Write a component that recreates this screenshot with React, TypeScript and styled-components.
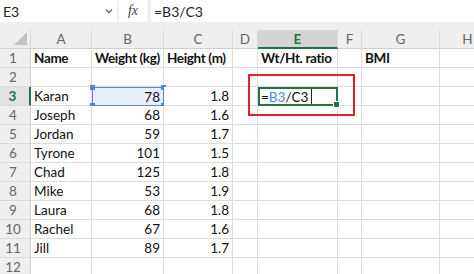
import React from 'react';
import styled, { createGlobalStyle } from 'styled-components';

const GREEN = '#217346';
const REF_BLUE = '#4f86e6';

const GlobalStyle = createGlobalStyle`
  body {
    margin: 0;
    background: #ffffff;
    font-family: Lato, "Liberation Sans", sans-serif;
  }
`;

const Sheet = styled.div`
  width: 474px;
  height: 274px;
  overflow: hidden;
  background: #efefef;
`;

const FormulaBar = styled.div`
  display: flex;
  height: 22px;
  gap: 2px;
  margin-bottom: 8px;
  font-size: 14px;
  color: #222;
`;

const NameBox = styled.div`
  width: 117px;
  background: #fff;
  display: flex;
  align-items: center;
  justify-content: space-between;
  padding: 0 4px 0 3px;
  box-sizing: border-box;
`;

const Chevron = styled.svg`
  width: 8px;
  height: 6px;
`;

const FxBox = styled.div`
  width: 28px;
  background: #fff;
  display: flex;
  align-items: center;
  justify-content: center;
  font-family: "Liberation Serif", serif;
  font-style: italic;
  font-size: 14px;
  color: #444;
  margin-right: 2px;
`;

const FormulaInput = styled.div`
  flex: 1;
  background: #fff;
  display: flex;
  align-items: center;
  padding-left: 3px;
`;

const Grid = styled.div`
  display: grid;
  grid-template-columns: 31px 61px 72px 69px 25px 80px 24px 78px 56px;
  grid-auto-rows: 19px;
  font-size: 13.5px;
`;

const Corner = styled.div`
  position: relative;
  background: #efefef;
  border-right: 1px solid #d6d6d6;
  border-bottom: 1px solid #cfcfcf;
  box-sizing: border-box;

  &::after {
    content: '';
    position: absolute;
    right: 3px;
    bottom: 3px;
    border-left: 13px solid transparent;
    border-bottom: 13px solid #c3c3c3;
  }
`;

const ColHeader = styled.div<{ $active?: boolean }>`
  display: flex;
  align-items: center;
  justify-content: center;
  box-sizing: border-box;
  background: ${(p) => (p.$active ? '#d4d4d4' : '#efefef')};
  color: ${(p) => (p.$active ? GREEN : '#666')};
  font-weight: ${(p) => (p.$active ? 700 : 400)};
  border-right: 1px solid #dadada;
  border-bottom: ${(p) => (p.$active ? `2px solid ${GREEN}` : '1px solid #cfcfcf')};
`;

const RowHeader = styled.div<{ $active?: boolean }>`
  display: flex;
  align-items: center;
  justify-content: center;
  padding-right: 4px;
  box-sizing: border-box;
  background: ${(p) => (p.$active ? '#e2e2e2' : '#efefef')};
  color: ${(p) => (p.$active ? GREEN : '#666')};
  font-weight: ${(p) => (p.$active ? 700 : 400)};
  border-right: ${(p) => (p.$active ? `2px solid ${GREEN}` : '1px solid #cfcfcf')};
  border-bottom: 1px solid #dadada;
`;

const Cell = styled.div<{ $num?: boolean; $bold?: boolean }>`
  position: relative;
  display: flex;
  align-items: center;
  justify-content: ${(p) => (p.$num ? 'flex-end' : 'flex-start')};
  padding: 0 3px;
  box-sizing: border-box;
  background: #fff;
  color: #111;
  white-space: nowrap;
  font-weight: ${(p) => (p.$bold ? 700 : 400)};
  letter-spacing: ${(p) => (p.$bold ? '-0.35px' : '0')};
  border-right: 1px solid #dcdcdc;
  border-bottom: 1px solid #dcdcdc;
`;

const RefCell = styled(Cell)`
  background: #e9f0fc;
  border: 1px solid ${REF_BLUE};
`;

const Handle = styled.span<{ $x: 'left' | 'right'; $y: 'top' | 'bottom' }>`
  position: absolute;
  width: 5px;
  height: 5px;
  background: ${REF_BLUE};
  ${(p) => p.$x}: -3px;
  ${(p) => p.$y}: -3px;
`;

const EditCell = styled(Cell)`
  border: 2px solid ${GREEN};
  padding-left: 1px;
  z-index: 2;
`;

const RefText = styled.span`
  color: ${REF_BLUE};
`;

const Caret = styled.span`
  display: inline-block;
  width: 1px;
  height: 15px;
  background: #222;
  margin-left: 3px;
`;

const FillHandle = styled.span`
  position: absolute;
  right: -4px;
  bottom: -4px;
  width: 5px;
  height: 5px;
  background: ${GREEN};
  border: 1px solid #fff;
`;

const Annotation = styled.span`
  position: absolute;
  left: -12px;
  top: -15px;
  width: 107px;
  height: 42px;
  border: 2px solid #e3202c;
  box-sizing: border-box;
  pointer-events: none;
`;

const columns = ['A', 'B', 'C', 'D', 'E', 'F', 'G', 'H'];

const people: [string, number, number][] = [
  ['Karan', 78, 1.8],
  ['Joseph', 68, 1.6],
  ['Jordan', 59, 1.7],
  ['Tyrone', 101, 1.5],
  ['Chad', 125, 1.8],
  ['Mike', 53, 1.9],
  ['Laura', 68, 1.8],
  ['Rachel', 67, 1.6],
  ['Jill', 89, 1.7],
];

const Blank = () => <Cell />;

const App = () => {
  const rows: React.ReactNode[] = [];

  // row 1: headings
  rows.push(
    <React.Fragment key="r1">
      <RowHeader>1</RowHeader>
      <Cell $bold>Name</Cell>
      <Cell $bold>Weight (kg)</Cell>
      <Cell $bold>Height (m)</Cell>
      <Blank />
      <Cell $bold>Wt/Ht. ratio</Cell>
      <Blank />
      <Cell $bold>BMI</Cell>
      <Blank />
    </React.Fragment>,
  );

  // row 2: empty
  rows.push(
    <React.Fragment key="r2">
      <RowHeader>2</RowHeader>
      {columns.map((c) => <Blank key={c} />)}
    </React.Fragment>,
  );

  people.forEach(([name, weight, height], i) => {
    const rowNo = i + 3;
    const isEdit = rowNo === 3;
    rows.push(
      <React.Fragment key={name}>
        <RowHeader $active={isEdit}>{rowNo}</RowHeader>
        <Cell>{name}</Cell>
        {isEdit ? (
          <RefCell $num>
            {weight}
            <Handle $x="left" $y="top" />
            <Handle $x="right" $y="top" />
            <Handle $x="left" $y="bottom" />
            <Handle $x="right" $y="bottom" />
          </RefCell>
        ) : (
          <Cell $num>{weight}</Cell>
        )}
        <Cell $num>{height.toFixed(1)}</Cell>
        <Blank />
        {isEdit ? (
          <EditCell>
            =<RefText>B3</RefText>/C3
            <Caret />
            <FillHandle />
            <Annotation />
          </EditCell>
        ) : (
          <Blank />
        )}
        <Blank />
        <Blank />
        <Blank />
      </React.Fragment>,
    );
  });

  rows.push(
    <React.Fragment key="r12">
      <RowHeader>12</RowHeader>
      {columns.map((c) => <Blank key={c} />)}
    </React.Fragment>,
  );

  return (
    <>
      <GlobalStyle />
      <Sheet>
        <FormulaBar>
          <NameBox>
            E3
            <Chevron viewBox="0 0 8 6">
              <path d="M1 1.5 L4 4.5 L7 1.5" fill="none" stroke="#666" strokeWidth="1.3" />
            </Chevron>
          </NameBox>
          <FxBox>fx</FxBox>
          <FormulaInput>=B3/C3</FormulaInput>
        </FormulaBar>
        <Grid>
          <Corner />
          {columns.map((c) => (
            <ColHeader key={c} $active={c === 'E'}>
              {c}
            </ColHeader>
          ))}
          {rows}
        </Grid>
      </Sheet>
    </>
  );
};

export default App;
